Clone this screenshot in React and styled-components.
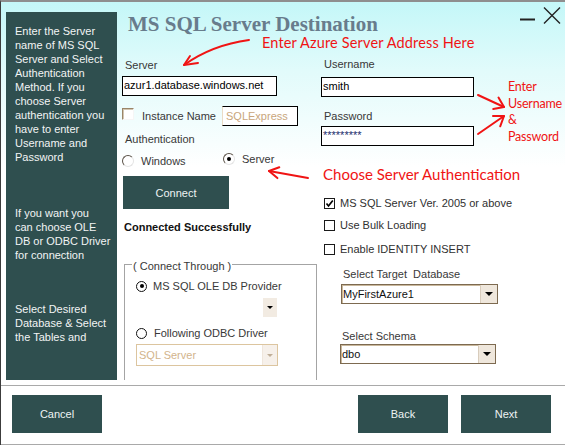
import React from 'react';
import styled, { createGlobalStyle } from 'styled-components';

const Global = createGlobalStyle`
  html, body { margin: 0; padding: 0; background: #fff; }
  body { font-family: "Liberation Sans", Arial, sans-serif; font-size: 11px; }
  *, *::before, *::after { box-sizing: border-box; }
`;

const Window = styled.div`
  position: relative;
  width: 565px;
  height: 445px;
  border-top: 2px solid #8e8e8e;
  border-left: 1px solid #3c3c3c;
  display: flex;
  flex-direction: column;
  background: #fff;
  overflow: hidden;
  font-family: "Liberation Sans", Arial, sans-serif;
  font-size: 11px;
  color: #333;
`;

const Main = styled.div`
  height: 384px;
  flex: none;
  display: flex;
  border-bottom: 1px solid #a9a9a9;
  background: linear-gradient(180deg, #c4f7f8 0px, #e2fbfb 70px, #ffffff 165px);
`;

const Sidebar = styled.aside`
  flex: none;
  width: 111px;
  margin: 10px 0 5px 5px;
  padding: 12px 0 0 9px;
  background: #2f4f4f;
  color: #f2f4f4;
  font-size: 11px;
  line-height: 14px;
  display: flex;
  flex-direction: column;
`;

const SideText = styled.p`
  margin: ${p => p.$gap || 0}px 0 0;
`;

const Content = styled.div`
  flex: 1;
  min-width: 0;
  display: flex;
  flex-direction: column;
`;

const TitleRow = styled.div`
  height: 32px;
  flex: none;
  display: flex;
  align-items: flex-start;
  padding: 0 4px 0 11px;
`;

const Title = styled.h1`
  margin: 12px 0 0;
  font-family: "Liberation Serif", "Times New Roman", serif;
  font-weight: bold;
  font-size: 21px;
  line-height: 20px;
  color: #687c8c;
  white-space: nowrap;
`;

const Controls = styled.div`
  margin: 5px 0 0 auto;
  display: flex;
  align-items: flex-start;
  gap: 8px;
`;

const Callout = styled.div`
  font-family: Lato, "Open Sans", sans-serif;
  color: #f01414;
  font-size: ${p => p.$size}px;
  line-height: ${p => p.$lh}px;
  letter-spacing: ${p => p.$ls || 0}px;
  margin-top: ${p => p.$mt || 0}px;
  padding-left: ${p => p.$pl || 0}px;
  white-space: nowrap;
`;

const Columns = styled.div`
  flex: 1;
  display: flex;
  padding-left: 5px;
`;

const Column = styled.div`
  flex: ${p => (p.$w ? 'none' : '1')};
  width: ${p => (p.$w ? `${p.$w}px` : 'auto')};
  display: flex;
  flex-direction: column;
  align-items: flex-start;
  margin-top: ${p => p.$mt || 0}px;
`;

const FieldLabel = styled.div`
  line-height: 14px;
  margin-top: ${p => p.$mt || 0}px;
  padding-left: ${p => p.$pl || 0}px;
  color: #383838;
  white-space: nowrap;
`;

const TextBox = styled.div`
  width: ${p => p.$w}px;
  height: 20px;
  margin-top: ${p => p.$mt || 0}px;
  border: 1px solid #000;
  background: #fff;
  padding: 1px 1px 0;
  line-height: 14px;
  color: ${p => (p.$secret ? '#1c2c6c' : '#000')};
  font-size: 11px;
  white-space: nowrap;
`;

const InstanceRow = styled.div`
  display: flex;
  align-items: center;
  height: 20px;
  margin-top: 10px;
`;

const Check3D = styled.span`
  align-self: flex-start;
  margin-top: 2px;
  width: 12px;
  height: 12px;
  border: 1px solid;
  border-color: #9a8568 #f6f6f6 #f6f6f6 #9a8568;
  box-shadow: inset 1px 1px 0 #d2c6b2;
  background: #fff;
`;

const InstanceLabel = styled.span`
  width: 80px;
  margin-left: 8px;
  line-height: 14px;
  color: #383838;
`;

const InstanceBox = styled.div`
  width: 76px;
  height: 20px;
  border: 1px solid #000;
  border-left-color: #eadcc6;
  background: #fff;
  color: #c9a67c;
  padding: 2px 3px 0;
  line-height: 14px;
`;

const RadioRow = styled.div`
  display: flex;
  align-items: flex-start;
  margin-top: ${p => p.$mt || 0}px;
  height: 14px;
`;

const RadioOption = styled.label`
  display: flex;
  align-items: center;
  gap: ${p => p.$gap || 7}px;
  width: ${p => (p.$w ? `${p.$w}px` : 'auto')};
  margin-top: ${p => (p.$mt !== undefined ? p.$mt : p.$raise ? -2 : 0)}px;
  line-height: 14px;
  color: #383838;
  white-space: nowrap;
`;

const Radio = styled.span`
  position: relative;
  flex: none;
  width: ${p => p.$size}px;
  height: ${p => p.$size}px;
  border-radius: 50%;
  border: 1px solid;
  border-color: ${p => (p.$flat ? '#111' : '#5a5248 #e4e4e4 #e4e4e4 #5a5248')};
  background: #fff;
  &::after {
    content: '';
    display: ${p => (p.$checked ? 'block' : 'none')};
    position: absolute;
    left: 50%;
    top: 50%;
    width: 4px;
    height: 4px;
    margin: -2px 0 0 -2px;
    border-radius: 50%;
    background: #000;
  }
`;

const DarkButton = styled.button`
  flex: none;
  width: ${p => p.$w}px;
  height: ${p => p.$h}px;
  margin: ${p => p.$mt || 0}px 0 0 ${p => p.$ml || 0}px;
  padding: 0;
  border: none;
  background: #2f4f4f;
  color: #eef3f3;
  font-family: "Liberation Sans", Arial, sans-serif;
  font-size: 11px;
  cursor: pointer;
`;

const Status = styled.div`
  margin: 11px 0 0 2px;
  font-weight: bold;
  line-height: 14px;
  color: #111;
`;

const GroupBox = styled.div`
  position: relative;
  margin: 30px 0 0 2px;
  width: 193px;
  height: 116px;
  border: 1px solid #a4a4a4;
  border-bottom: none;
  padding-left: 11px;
  display: flex;
  flex-direction: column;
  align-items: flex-start;
`;

const Legend = styled.span`
  position: absolute;
  top: -6px;
  left: 7px;
  padding: 0 1px;
  background: #fff;
  line-height: 14px;
  color: #383838;
`;

const Arrow = styled.span`
  width: 0;
  height: 0;
  border-left: ${p => p.$s}px solid transparent;
  border-right: ${p => p.$s}px solid transparent;
  border-top: ${p => Math.ceil(p.$s * 0.8)}px solid ${p => p.$c || '#000'};
`;

const MiniDrop = styled.div`
  margin: 5px 0 0 127px;
  width: 14px;
  height: 19px;
  background: #f2ebe2;
  display: flex;
  align-items: center;
  justify-content: center;
`;

const DisabledSelect = styled.div`
  margin-top: 4px;
  width: 142px;
  height: 22px;
  border: 1px solid #dcc59f;
  background: #fff;
  color: #d2b48c;
  padding-left: 2px;
  display: flex;
  align-items: center;
  justify-content: space-between;
`;

const DisabledDrop = styled.div`
  width: 15px;
  height: 100%;
  background: #f6f0ea;
  border-left: 1px solid #efe6dc;
  display: flex;
  align-items: center;
  justify-content: center;
`;

const CheckRow = styled.label`
  display: flex;
  align-items: center;
  gap: 5px;
  margin-top: ${p => p.$mt}px;
  padding-left: 3px;
  line-height: 14px;
  color: #303030;
  white-space: nowrap;
`;

const CheckBox = styled.span`
  flex: none;
  width: 11px;
  height: 11px;
  border: 1px solid #1a1a1a;
  background: #fff;
  display: flex;
  align-items: center;
  justify-content: center;
`;

const Select = styled.div`
  margin: ${p => p.$mt}px 0 0 ${p => p.$ml}px;
  width: ${p => p.$w}px;
  height: 20px;
  border: 1px solid #7d6a50;
  box-shadow: inset 1px 1px 0 #c9b89c;
  background: #fff;
  display: flex;
  align-items: center;
  justify-content: space-between;
  padding-left: 1px;
  color: #111;
`;

const SelectDrop = styled.div`
  width: 17px;
  height: 100%;
  background: #efe7dc;
  border-left: 1px solid #d8ccbc;
  display: flex;
  align-items: center;
  justify-content: center;
`;

const Footer = styled.footer`
  height: 59px;
  flex: none;
  display: flex;
  align-items: flex-start;
  gap: 13px;
  padding: 9px 14px 0 11px;
  border-bottom: 1px solid #a9a9a9;
  background: #fff;
`;

const Spacer = styled.div`
  flex: 1;
`;

const Overlay = styled.svg`
  position: absolute;
  top: -2px;
  left: -1px;
  width: 565px;
  height: 445px;
  pointer-events: none;
`;

function head(tx, ty, fx, fy, len = 10, deg = 35) {
  const dx = fx - tx;
  const dy = fy - ty;
  const m = Math.hypot(dx, dy);
  const ux = dx / m;
  const uy = dy / m;
  const a = (deg * Math.PI) / 180;
  const c = Math.cos(a);
  const s = Math.sin(a);
  const w1 = [tx + len * (ux * c - uy * s), ty + len * (ux * s + uy * c)];
  const w2 = [tx + len * (ux * c + uy * s), ty + len * (-ux * s + uy * c)];
  return `M ${w1[0].toFixed(1)} ${w1[1].toFixed(1)} L ${tx} ${ty} L ${w2[0].toFixed(1)} ${w2[1].toFixed(1)}`;
}

function Arrows() {
  const red = '#f01414';
  return (
    <Overlay viewBox="0 0 565 445">
      <g fill="none" stroke={red} strokeWidth="2" strokeLinecap="round" strokeLinejoin="round">
        <path d="M 249 40 Q 212 45 184 65" />
        <path d="M 190 56 L 184 65 L 198 63" />
        <path d="M 308 178 L 269 171" />
        <path d={head(269, 171, 308, 178, 11, 30)} />
        <path d="M 478 95 L 504 107" />
        <path d={head(504, 107, 478, 95, 11, 35)} />
        <path d="M 478 134 L 504 116" />
        <path d={head(504, 116, 478, 134, 11, 35)} />
      </g>
    </Overlay>
  );
}

export default function App() {
  return (
    <>
      <Global />
      <Window>
        <Main>
          <Sidebar>
            <SideText>
              Enter the Server<br />name of MS SQL<br />Server and Select<br />Authentication<br />
              Method. If you<br />choose Server<br />authentication you<br />have to enter<br />
              Username and<br />Password
            </SideText>
            <SideText $gap={42}>
              If you want you<br />can choose OLE<br />DB or ODBC Driver<br />for connection
            </SideText>
            <SideText $gap={40}>
              Select Desired<br />Database &amp; Select<br />the Tables and
            </SideText>
          </Sidebar>
          <Content>
            <TitleRow>
              <Title>MS SQL Server Destination</Title>
              <Controls>
                <svg width="15" height="17" viewBox="0 0 15 17">
                  <line x1="0" y1="12.5" x2="15" y2="12.5" stroke="#222" strokeWidth="2" />
                </svg>
                <svg width="18" height="17" viewBox="0 0 18 17">
                  <path d="M1 0.5 L17 16.5 M17 0.5 L1 16.5" stroke="#222" strokeWidth="1.4" fill="none" />
                </svg>
              </Controls>
            </TitleRow>
            <Callout $size={14.5} $lh={18} $ls={0.15} $pl={145}>Enter Azure Server Address Here</Callout>
            <Columns>
              <Column $w={199}>
                <FieldLabel $mt={6} $pl={3}>Server</FieldLabel>
                <TextBox $w={155} $mt={4}>azur1.database.windows.net</TextBox>
                <InstanceRow>
                  <Check3D />
                  <InstanceLabel>Instance Name</InstanceLabel>
                  <InstanceBox>SQLExpress</InstanceBox>
                </InstanceRow>
                <FieldLabel $mt={6} $pl={3}>Authentication</FieldLabel>
                <RadioRow $mt={8}>
                  <RadioOption $w={101}>
                    <Radio $size={12} />
                    Windows
                  </RadioOption>
                  <RadioOption $raise>
                    <Radio $size={12} $checked />
                    Server
                  </RadioOption>
                </RadioRow>
                <DarkButton $w={106} $h={33} $mt={8} $ml={1}>Connect</DarkButton>
                <Status>Connected Successfully</Status>
                <GroupBox>
                  <Legend>( Connect Through )</Legend>
                  <RadioOption $gap={6} $mt={14}>
                    <Radio $size={11} $flat $checked />
                    MS SQL OLE DB Provider
                  </RadioOption>
                  <MiniDrop>
                    <Arrow $s={3} />
                  </MiniDrop>
                  <RadioOption $gap={7} $mt={9}>
                    <Radio $size={11} $flat />
                    Following ODBC Driver
                  </RadioOption>
                  <DisabledSelect>
                    <span>SQL Server</span>
                    <DisabledDrop>
                      <Arrow $s={3} $c="#bfae98" />
                    </DisabledDrop>
                  </DisabledSelect>
                </GroupBox>
              </Column>
              <Column $w={187}>
                <FieldLabel $mt={5} $pl={3}>Username</FieldLabel>
                <TextBox $w={153} $mt={6}>smith</TextBox>
                <FieldLabel $mt={12} $pl={3}>Password</FieldLabel>
                <TextBox $w={153} $mt={3} $secret>*********</TextBox>
                <Callout $size={15} $lh={20} $mt={18} $pl={2}>Choose Server Authentication</Callout>
                <CheckRow $mt={12}>
                  <CheckBox>
                    <svg width="9" height="9" viewBox="0 0 9 9">
                      <path d="M1.5 4.5 L3.5 7 L7.8 1.5" stroke="#000" strokeWidth="1.7" fill="none" />
                    </svg>
                  </CheckBox>
                  MS SQL Server Ver. 2005 or above
                </CheckRow>
                <CheckRow $mt={8}>
                  <CheckBox />
                  Use Bulk Loading
                </CheckRow>
                <CheckRow $mt={10}>
                  <CheckBox />
                  Enable IDENTITY INSERT
                </CheckRow>
                <FieldLabel $mt={11} $pl={22}>Select Target&nbsp; Database</FieldLabel>
                <Select $mt={3} $ml={20} $w={157}>
                  <span>MyFirstAzure1</span>
                  <SelectDrop>
                    <Arrow $s={4} />
                  </SelectDrop>
                </Select>
                <FieldLabel $mt={25} $pl={21}>Select Schema</FieldLabel>
                <Select $mt={1} $ml={19} $w={156}>
                  <span>dbo</span>
                  <SelectDrop>
                    <Arrow $s={4} />
                  </SelectDrop>
                </Select>
              </Column>
              <Column $mt={27}>
                <Callout $size={12.5} $lh={16.5} $ls={-0.2}>
                  Enter<br />Username<br />&amp;<br />Password
                </Callout>
              </Column>
            </Columns>
          </Content>
        </Main>
        <Footer>
          <DarkButton $w={90} $h={38}>Cancel</DarkButton>
          <Spacer />
          <DarkButton $w={90} $h={38}>Back</DarkButton>
          <DarkButton $w={90} $h={38}>Next</DarkButton>
        </Footer>
        <Arrows />
      </Window>
    </>
  );
}
